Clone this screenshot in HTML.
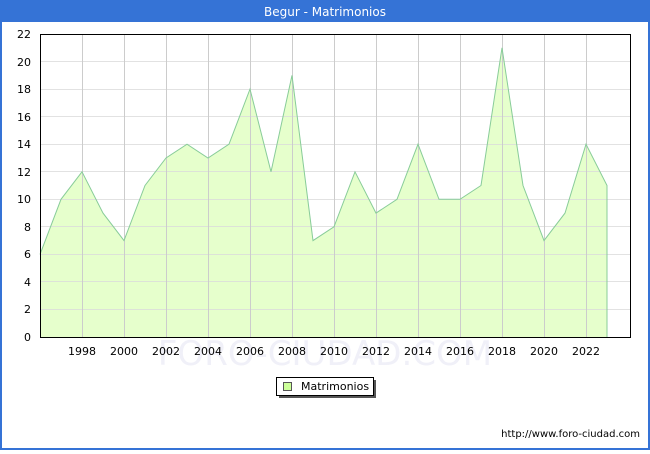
<!DOCTYPE html>
<html><head><meta charset="utf-8"><style>
body{margin:0;width:650px;height:450px;overflow:hidden;font-family:"DejaVu Sans","Liberation Sans",sans-serif;}
</style></head><body>
<svg width="650" height="450" xmlns="http://www.w3.org/2000/svg" font-family="DejaVu Sans, Liberation Sans, sans-serif">
<rect x="0" y="0" width="650" height="450" fill="#3573d6"/>
<rect x="2" y="22" width="646" height="426" fill="#fff"/>
<text x="325" y="16" fill="#fff" font-size="12" text-anchor="middle">Begur - Matrimonios</text>
<polygon fill="#e6ffcc" stroke="none" points="40,337 40,254.4 61,199.3 82,171.8 103,213.1 124,240.6 145,185.5 166,158 187,144.2 208,158 229,144.2 250,89.1 271,171.8 292,75.4 313,240.6 334,226.8 355,171.8 376,213.1 397,199.3 418,144.2 439,199.3 460,199.3 481,185.5 502,47.8 523,185.5 544,240.6 565,213.1 586,144.2 607,185.5 607,337"/>
<g stroke="#dcdcdc" stroke-width="1" opacity="0.8">
<line x1="40" x2="630" y1="309.5" y2="309.5"/><line x1="40" x2="630" y1="281.5" y2="281.5"/><line x1="40" x2="630" y1="254.5" y2="254.5"/><line x1="40" x2="630" y1="226.5" y2="226.5"/><line x1="40" x2="630" y1="199.5" y2="199.5"/><line x1="40" x2="630" y1="171.5" y2="171.5"/><line x1="40" x2="630" y1="144.5" y2="144.5"/><line x1="40" x2="630" y1="116.5" y2="116.5"/><line x1="40" x2="630" y1="89.5" y2="89.5"/><line x1="40" x2="630" y1="61.5" y2="61.5"/>
</g>
<g stroke="#cccccc" stroke-width="1">
<line x1="82.5" x2="82.5" y1="34" y2="337"/><line x1="124.5" x2="124.5" y1="34" y2="337"/><line x1="166.5" x2="166.5" y1="34" y2="337"/><line x1="208.5" x2="208.5" y1="34" y2="337"/><line x1="250.5" x2="250.5" y1="34" y2="337"/><line x1="292.5" x2="292.5" y1="34" y2="337"/><line x1="334.5" x2="334.5" y1="34" y2="337"/><line x1="376.5" x2="376.5" y1="34" y2="337"/><line x1="418.5" x2="418.5" y1="34" y2="337"/><line x1="460.5" x2="460.5" y1="34" y2="337"/><line x1="502.5" x2="502.5" y1="34" y2="337"/><line x1="544.5" x2="544.5" y1="34" y2="337"/><line x1="586.5" x2="586.5" y1="34" y2="337"/>
</g>
<polyline fill="none" stroke="#88cc99" stroke-width="1" points="40,254.4 61,199.3 82,171.8 103,213.1 124,240.6 145,185.5 166,158 187,144.2 208,158 229,144.2 250,89.1 271,171.8 292,75.4 313,240.6 334,226.8 355,171.8 376,213.1 397,199.3 418,144.2 439,199.3 460,199.3 481,185.5 502,47.8 523,185.5 544,240.6 565,213.1 586,144.2 607,185.5 607,337"/>
<text x="325" y="365" font-size="34" fill="#f0f0f8" text-anchor="middle">FORO-CIUDAD.COM</text>
<rect x="40.5" y="34.5" width="590" height="303" fill="none" stroke="#000"/>
<g font-size="11" fill="#000" text-anchor="end">
<text x="31" y="341">0</text><text x="31" y="313">2</text><text x="31" y="286">4</text><text x="31" y="258">6</text><text x="31" y="231">8</text><text x="31" y="203">10</text><text x="31" y="176">12</text><text x="31" y="148">14</text><text x="31" y="121">16</text><text x="31" y="93">18</text><text x="31" y="66">20</text><text x="31" y="38">22</text>
</g>
<g font-size="11" fill="#000" text-anchor="middle">
<text x="82" y="355">1998</text><text x="124" y="355">2000</text><text x="166" y="355">2002</text><text x="208" y="355">2004</text><text x="250" y="355">2006</text><text x="292" y="355">2008</text><text x="334" y="355">2010</text><text x="376" y="355">2012</text><text x="418" y="355">2014</text><text x="460" y="355">2016</text><text x="502" y="355">2018</text><text x="544" y="355">2020</text><text x="586" y="355">2022</text>
</g>
<rect x="279" y="380" width="97" height="18" fill="#555"/>
<rect x="276.5" y="377.5" width="97" height="18" fill="#fff" stroke="#000"/>
<rect x="283.5" y="382.5" width="8" height="8" fill="#ccff99" stroke="#555"/>
<text x="301" y="390" font-size="11" fill="#000">Matrimonios</text>
<text x="640" y="437" font-size="10" fill="#000" text-anchor="end">http://www.foro-ciudad.com</text>
</svg>
</body></html>
